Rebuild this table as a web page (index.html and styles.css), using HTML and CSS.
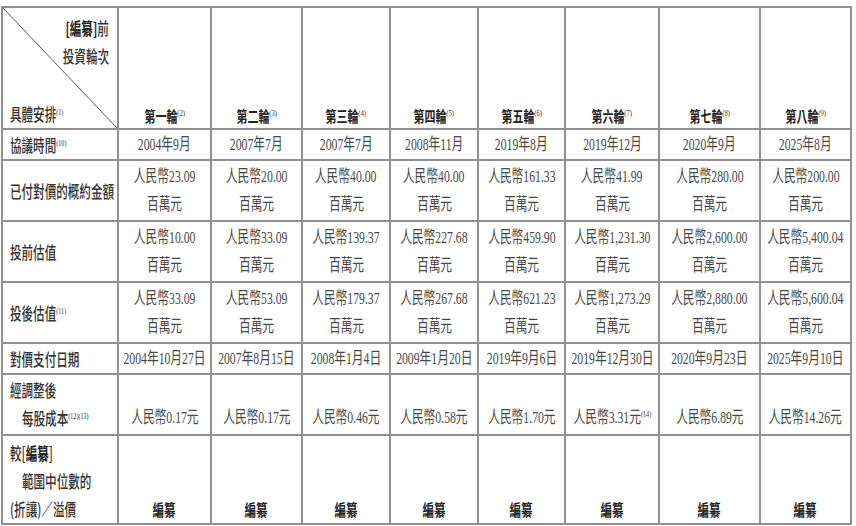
FILE: index.html
```html
<!DOCTYPE html>
<html lang="zh-Hant">
<head>
<meta charset="utf-8">
<title>投資輪次</title>
<link rel="stylesheet" href="styles.css">
</head>
<body>
<table class="grid">
  <colgroup>
    <col class="w0"><col class="w1"><col class="w2"><col class="w3"><col class="w4"><col class="w5"><col class="w6"><col class="w7"><col class="w8">
  </colgroup>
  <tr class="rh">
    <td class="corner">
      <div class="ct">
        <span class="lt r"><b>[編纂]</b>前</span>
        <span class="lt r">投資輪次</span>
      </div>
      <div class="cb"><span class="lt">具體安排<sup>(1)</sup></span></div>
    </td>
    <td class="hd"><div class="c"><span class="bt">第一輪<sup>(2)</sup></span></div></td>
    <td class="hd"><div class="c"><span class="bt">第二輪<sup>(3)</sup></span></div></td>
    <td class="hd"><div class="c"><span class="bt">第三輪<sup>(4)</sup></span></div></td>
    <td class="hd"><div class="c"><span class="bt">第四輪<sup>(5)</sup></span></div></td>
    <td class="hd"><div class="c"><span class="bt">第五輪<sup>(6)</sup></span></div></td>
    <td class="hd"><div class="c"><span class="bt">第六輪<sup>(7)</sup></span></div></td>
    <td class="hd"><div class="c"><span class="bt">第七輪<sup>(8)</sup></span></div></td>
    <td class="hd"><div class="c"><span class="bt">第八輪<sup>(9)</sup></span></div></td>
  </tr>
  <tr class="r1">
    <td class="lab"><div class="l"><span class="lt">協議時間<sup>(10)</sup></span></div></td>
    <td><div class="c"><span class="v">2004年9月</span></div></td>
    <td><div class="c"><span class="v">2007年7月</span></div></td>
    <td><div class="c"><span class="v">2007年7月</span></div></td>
    <td><div class="c"><span class="v">2008年11月</span></div></td>
    <td><div class="c"><span class="v">2019年8月</span></div></td>
    <td><div class="c"><span class="v">2019年12月</span></div></td>
    <td><div class="c"><span class="v">2020年9月</span></div></td>
    <td><div class="c"><span class="v">2025年8月</span></div></td>
  </tr>
  <tr class="r2">
    <td class="lab"><div class="l"><span class="lt">已付對價的概約金額</span></div></td>
    <td><div class="c"><span class="v">人民幣23.09</span><span class="v">百萬元</span></div></td>
    <td><div class="c"><span class="v">人民幣20.00</span><span class="v">百萬元</span></div></td>
    <td><div class="c"><span class="v">人民幣40.00</span><span class="v">百萬元</span></div></td>
    <td><div class="c"><span class="v">人民幣40.00</span><span class="v">百萬元</span></div></td>
    <td><div class="c"><span class="v">人民幣161.33</span><span class="v">百萬元</span></div></td>
    <td><div class="c"><span class="v">人民幣41.99</span><span class="v">百萬元</span></div></td>
    <td><div class="c"><span class="v">人民幣280.00</span><span class="v">百萬元</span></div></td>
    <td><div class="c"><span class="v">人民幣200.00</span><span class="v">百萬元</span></div></td>
  </tr>
  <tr class="r2">
    <td class="lab"><div class="l"><span class="lt">投前估值</span></div></td>
    <td><div class="c"><span class="v">人民幣10.00</span><span class="v">百萬元</span></div></td>
    <td><div class="c"><span class="v">人民幣33.09</span><span class="v">百萬元</span></div></td>
    <td><div class="c"><span class="v">人民幣139.37</span><span class="v">百萬元</span></div></td>
    <td><div class="c"><span class="v">人民幣227.68</span><span class="v">百萬元</span></div></td>
    <td><div class="c"><span class="v">人民幣459.90</span><span class="v">百萬元</span></div></td>
    <td><div class="c"><span class="v">人民幣1,231.30</span><span class="v">百萬元</span></div></td>
    <td><div class="c"><span class="v">人民幣2,600.00</span><span class="v">百萬元</span></div></td>
    <td><div class="c"><span class="v">人民幣5,400.04</span><span class="v">百萬元</span></div></td>
  </tr>
  <tr class="r2">
    <td class="lab"><div class="l"><span class="lt">投後估值<sup>(11)</sup></span></div></td>
    <td><div class="c"><span class="v">人民幣33.09</span><span class="v">百萬元</span></div></td>
    <td><div class="c"><span class="v">人民幣53.09</span><span class="v">百萬元</span></div></td>
    <td><div class="c"><span class="v">人民幣179.37</span><span class="v">百萬元</span></div></td>
    <td><div class="c"><span class="v">人民幣267.68</span><span class="v">百萬元</span></div></td>
    <td><div class="c"><span class="v">人民幣621.23</span><span class="v">百萬元</span></div></td>
    <td><div class="c"><span class="v">人民幣1,273.29</span><span class="v">百萬元</span></div></td>
    <td><div class="c"><span class="v">人民幣2,880.00</span><span class="v">百萬元</span></div></td>
    <td><div class="c"><span class="v">人民幣5,600.04</span><span class="v">百萬元</span></div></td>
  </tr>
  <tr class="r1">
    <td class="lab"><div class="l"><span class="lt">對價支付日期</span></div></td>
    <td><div class="c"><span class="v">2004年10月27日</span></div></td>
    <td><div class="c"><span class="v">2007年8月15日</span></div></td>
    <td><div class="c"><span class="v">2008年1月4日</span></div></td>
    <td><div class="c"><span class="v">2009年1月20日</span></div></td>
    <td><div class="c"><span class="v">2019年9月6日</span></div></td>
    <td><div class="c"><span class="v">2019年12月30日</span></div></td>
    <td><div class="c"><span class="v">2020年9月23日</span></div></td>
    <td><div class="c"><span class="v">2025年9月10日</span></div></td>
  </tr>
  <tr class="r2 bot">
    <td class="lab"><div class="l"><span class="lt">經調整後</span><span class="lt ind">每股成本<sup>(12)(13)</sup></span></div></td>
    <td><div class="c"><span class="v">人民幣0.17元</span></div></td>
    <td><div class="c"><span class="v">人民幣0.17元</span></div></td>
    <td><div class="c"><span class="v">人民幣0.46元</span></div></td>
    <td><div class="c"><span class="v">人民幣0.58元</span></div></td>
    <td><div class="c"><span class="v">人民幣1.70元</span></div></td>
    <td><div class="c"><span class="v">人民幣3.31元<sup>(14)</sup></span></div></td>
    <td><div class="c"><span class="v">人民幣6.89元</span></div></td>
    <td><div class="c"><span class="v">人民幣14.26元</span></div></td>
  </tr>
  <tr class="r7 bot">
    <td class="lab"><div class="l"><span class="lt">較[<b>編纂</b>]</span><span class="lt ind">範圍中位數的</span><span class="lt">(折讓)／溢價</span></div></td>
    <td><div class="c"><span class="bt big">編纂</span></div></td>
    <td><div class="c"><span class="bt big">編纂</span></div></td>
    <td><div class="c"><span class="bt big">編纂</span></div></td>
    <td><div class="c"><span class="bt big">編纂</span></div></td>
    <td><div class="c"><span class="bt big">編纂</span></div></td>
    <td><div class="c"><span class="bt big">編纂</span></div></td>
    <td><div class="c"><span class="bt big">編纂</span></div></td>
    <td><div class="c"><span class="bt big">編纂</span></div></td>
  </tr>
</table>
</body>
</html>
```
FILE: styles.css
```css
html, body {
  margin: 0;
  padding: 0;
  background: #ffffff;
}

.grid {
  border-collapse: collapse;
  table-layout: fixed;
  width: 849px;
  margin: 6px 0 0 1px;
}

.w0 { width: 116px; }
.w1 { width: 93px; }
.w2 { width: 91px; }
.w3 { width: 88px; }
.w4 { width: 88px; }
.w5 { width: 87px; }
.w6 { width: 94px; }
.w7 { width: 101px; }
.w8 { width: 91px; }

.grid td {
  border: 2px solid #909090;
  padding: 0;
  font-family: "Liberation Serif", "Noto Sans CJK TC", serif;
  font-size: 17px;
  line-height: 28px;
  color: #474747;
  vertical-align: middle;
  overflow: visible;
}

.rh { height: 120px; }
.r1 { height: 31px; }
.r2 { height: 61px; }
.r7 { height: 89px; }

.bot td { vertical-align: bottom; padding-bottom: 2px; }
.r7 td { padding-bottom: 0; }

.c {
  display: flex;
  flex-direction: column;
  align-items: center;
}

.l {
  display: flex;
  flex-direction: column;
  align-items: flex-start;
  padding-left: 7px;
}

.v {
  display: block;
  white-space: nowrap;
  transform: scaleX(0.69);
  transform-origin: 50% 50%;
}

.lt {
  display: block;
  white-space: nowrap;
  font-family: "Noto Sans CJK TC", sans-serif;
  font-size: 17px;
  font-weight: 500;
  color: #333333;
  transform: scaleX(0.68);
  transform-origin: 0 50%;
}

.lt.r { transform-origin: 100% 50%; }
.lt.ind { margin-left: 12px; }

.lt b, .bt {
  font-weight: 700;
  color: #222222;
}

.bt {
  display: block;
  white-space: nowrap;
  font-family: "Noto Sans CJK TC", sans-serif;
  font-size: 15px;
  transform: scaleX(0.73);
  transform-origin: 50% 50%;
}

.bt.big {
  font-size: 16px;
  transform: scaleX(0.72);
}

.grid td.hd { vertical-align: bottom; line-height: 24px; }

sup {
  font-family: "Liberation Serif", serif;
  font-size: 9px;
  font-weight: 400;
  line-height: 0;
  vertical-align: 6px;
  color: #333333;
}

.grid td.corner {
  vertical-align: top;
  padding-top: 6px;
  background: linear-gradient(to top right, transparent calc(50% - 0.8px), #666666 50%, transparent calc(50% + 0.8px));
}

.ct {
  display: flex;
  flex-direction: column;
  align-items: flex-end;
  padding-right: 8px;
}

.cb {
  display: flex;
  flex-direction: column;
  align-items: flex-start;
  padding-left: 7px;
  margin-top: 30px;
  line-height: 28px;
}
```
